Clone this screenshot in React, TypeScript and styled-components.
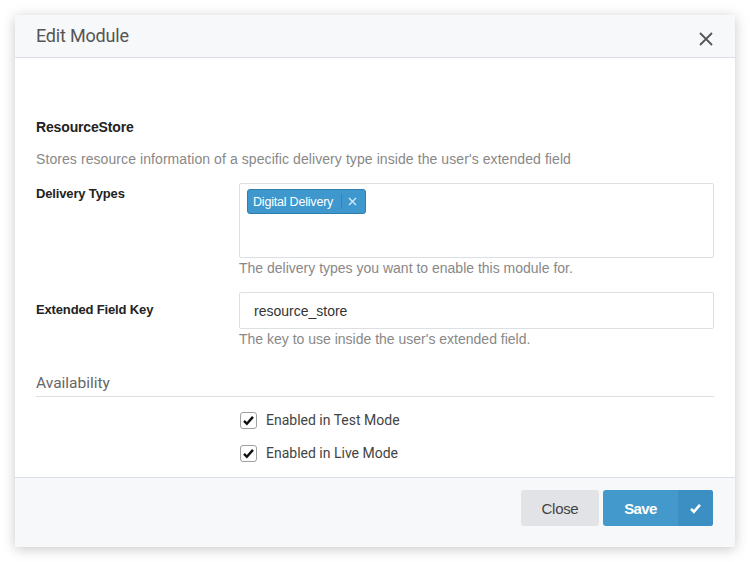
import React from "react";
import styled, { createGlobalStyle } from "styled-components";

const Global = createGlobalStyle`
  html, body { margin: 0; padding: 0; background: #ffffff; }
  body { font-family: "Liberation Sans", Arial, sans-serif; }
  * { box-sizing: border-box; }
`;

const Page = styled.div`
  padding: 15px;
  width: 750px;
  height: 562px;
`;

const Modal = styled.div`
  width: 720px;
  height: 532px;
  background: #fff;
  display: flex;
  flex-direction: column;
  box-shadow: 0 2px 12px rgba(0, 0, 0, 0.22);
`;

const Header = styled.div`
  height: 43px;
  flex: none;
  display: flex;
  align-items: center;
  justify-content: space-between;
  padding: 0 22px 0 21px;
  background: #f7f8fa;
  border-bottom: 1px solid #dcdfe3;
`;

const Title = styled.div`
  font-family: Roboto, "Liberation Sans", sans-serif;
  font-size: 18px;
  color: #555;
  letter-spacing: -0.2px;
  margin-top: -2px;
`;

const CloseIcon = styled.svg`
  width: 14px;
  height: 14px;
  margin-top: 6px;
`;

const Body = styled.div`
  flex: 1;
  padding: 61px 21px 0 21px;
`;

const ModuleName = styled.div`
  font-size: 14px;
  font-weight: bold;
  color: #222;
  letter-spacing: -0.15px;
  line-height: 17px;
`;

const Description = styled.div`
  font-size: 14px;
  color: #888;
  line-height: 17px;
  letter-spacing: 0.08px;
  margin-top: 15px;
`;

const Row = styled.div<{ $top: number }>`
  display: grid;
  grid-template-columns: 203px 1fr;
  margin-top: ${(p) => p.$top}px;
`;

const Label = styled.div<{ $pad: number }>`
  font-size: 13px;
  font-weight: bold;
  color: #222;
  letter-spacing: -0.15px;
  line-height: 16px;
  padding-top: ${(p) => p.$pad}px;
`;

const TagBox = styled.div`
  height: 75px;
  border: 1px solid #dcdfe3;
  border-radius: 2px;
  padding: 5px 7px;
  display: flex;
  align-items: flex-start;
`;

const Tag = styled.div`
  display: flex;
  align-items: center;
  height: 25px;
  background: #3e97cd;
  border: 1px solid #2f7eb0;
  border-radius: 3px;
  color: #fff;
  font-size: 12.5px;
`;

const TagText = styled.span`
  padding: 0 8px 0 5px;
  letter-spacing: -0.2px;
`;

const TagRemove = styled.span`
  border-left: 1px solid #3583b6;
  padding: 0 8px 0 6px;
  height: 15px;
  display: flex;
  align-items: center;
`;

const Help = styled.div`
  font-size: 14px;
  color: #888;
  line-height: 17px;
  margin-top: 2px;
`;

const Input = styled.div`
  height: 37px;
  border: 1px solid #dcdfe3;
  border-radius: 2px;
  padding: 0 14px;
  display: flex;
  align-items: center;
  font-size: 14px;
  color: #333;
`;

const SectionTitle = styled.div`
  margin-top: 26px;
  font-family: Roboto, "Liberation Sans", sans-serif;
  font-size: 15.5px;
  color: #666;
  padding-bottom: 4px;
  border-bottom: 1px solid #dcdfe3;
`;

const Checks = styled.div`
  padding-left: 203px;
  padding-top: 15px;
  display: flex;
  flex-direction: column;
  gap: 17px;
`;

const CheckRow = styled.label`
  display: flex;
  align-items: center;
  gap: 9px;
  font-family: Roboto, "Liberation Sans", sans-serif;
  font-size: 14px;
  color: #444;
  height: 16px;
`;

const Box = styled.span`
  width: 17px;
  height: 17px;
  border: 1px solid #a0a0a0;
  border-radius: 3px;
  display: flex;
  align-items: center;
  justify-content: center;
  margin-left: 1px;
`;

const Footer = styled.div`
  height: 70px;
  flex: none;
  background: #f7f8fa;
  border-top: 1px solid #dcdfe3;
  display: flex;
  justify-content: flex-end;
  align-items: flex-start;
  padding: 12px 22px 0 0;
  gap: 4px;
`;

const GreyButton = styled.button`
  width: 78px;
  height: 36px;
  border: none;
  border-radius: 3px;
  background: #e1e3e6;
  color: #444;
  font-family: "Liberation Sans", Arial, sans-serif;
  font-size: 15px;
  letter-spacing: -0.3px;
`;

const SaveButton = styled.button`
  width: 110px;
  height: 36px;
  border: none;
  border-radius: 3px;
  background: #4399cc;
  color: #fff;
  display: flex;
  padding: 0;
  overflow: hidden;
  font-family: "Liberation Sans", Arial, sans-serif;
`;

const SaveLabel = styled.span`
  flex: 1;
  display: flex;
  align-items: center;
  justify-content: center;
  font-weight: bold;
  font-size: 15px;
  letter-spacing: -0.6px;
`;

const SaveIcon = styled.span`
  width: 35px;
  display: flex;
  align-items: center;
  justify-content: center;
  background: #3c8fc2;
`;

const Check = ({ color, size, weight }: { color: string; size: number; weight: number }) => (
  <svg width={size} height={size} viewBox="0 0 16 16">
    <path d="M2.5 8.5 L6 12 L13.5 3.5" fill="none" stroke={color} strokeWidth={weight} strokeLinecap="butt" strokeLinejoin="miter" />
  </svg>
);

export default function App() {
  return (
    <>
      <Global />
      <Page>
        <Modal>
          <Header>
            <Title>Edit Module</Title>
            <CloseIcon viewBox="0 0 14 14">
              <path d="M1 1 L13 13 M13 1 L1 13" stroke="#555" strokeWidth={1.8} />
            </CloseIcon>
          </Header>
          <Body>
            <ModuleName>ResourceStore</ModuleName>
            <Description>
              Stores resource information of a specific delivery type inside the user's extended field
            </Description>
            <Row $top={15}>
              <Label $pad={3}>Delivery Types</Label>
              <div>
                <TagBox>
                  <Tag>
                    <TagText>Digital Delivery</TagText>
                    <TagRemove>
                      <svg width="9" height="9" viewBox="0 0 9 9">
                        <path d="M1 1 L8 8 M8 1 L1 8" stroke="#d9eaf5" strokeWidth={1.3} />
                      </svg>
                    </TagRemove>
                  </Tag>
                </TagBox>
                <Help>The delivery types you want to enable this module for.</Help>
              </div>
            </Row>
            <Row $top={15}>
              <Label $pad={10}>Extended Field Key</Label>
              <div>
                <Input>resource_store</Input>
                <Help>The key to use inside the user's extended field.</Help>
              </div>
            </Row>
            <SectionTitle>Availability</SectionTitle>
            <Checks>
              <CheckRow>
                <Box>
                  <Check color="#111" size={13} weight={3} />
                </Box>
                Enabled in Test Mode
              </CheckRow>
              <CheckRow>
                <Box>
                  <Check color="#111" size={13} weight={3} />
                </Box>
                Enabled in Live Mode
              </CheckRow>
            </Checks>
          </Body>
          <Footer>
            <GreyButton>Close</GreyButton>
            <SaveButton>
              <SaveLabel>Save</SaveLabel>
              <SaveIcon>
                <Check color="#fff" size={13} weight={3.2} />
              </SaveIcon>
            </SaveButton>
          </Footer>
        </Modal>
      </Page>
    </>
  );
}
